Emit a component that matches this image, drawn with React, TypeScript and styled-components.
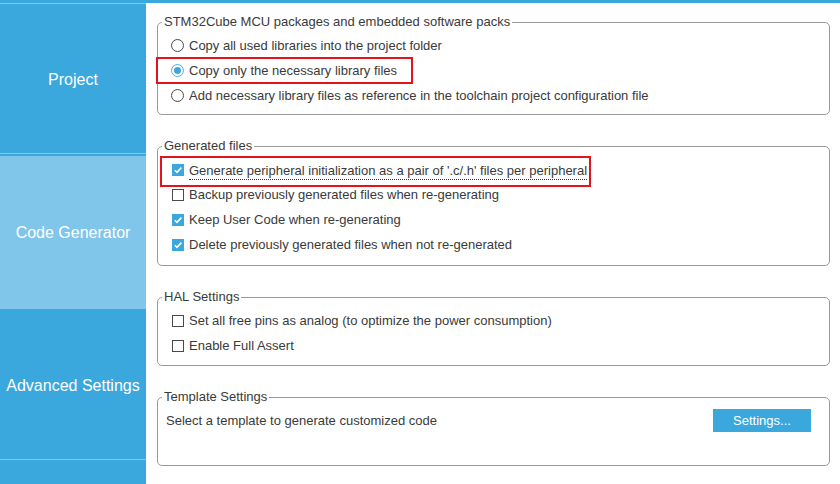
import React from "react";
import styled, { createGlobalStyle, css } from "styled-components";

const Global = createGlobalStyle`
  html, body {
    margin: 0;
    padding: 0;
    background: #fff;
  }
  body {
    font-family: "Liberation Sans", Arial, sans-serif;
    font-size: 13px;
    color: #3a3a3a;
  }
`;

const Page = styled.div`
  width: 840px;
  height: 484px;
  display: flex;
  flex-direction: column;
  overflow: hidden;
`;

const TopBar = styled.div`
  height: 3px;
  background: #3aa8dc;
  flex: none;
`;

const Body = styled.div`
  flex: 1;
  display: flex;
`;

const Sidebar = styled.nav`
  width: 146px;
  flex: none;
  background: #3aa8dc;
  box-shadow: inset 0 1px 0 #80c7ea;
  display: flex;
  flex-direction: column;
`;

const NavItem = styled.div<{ $active?: boolean }>`
  height: 153px;
  flex: none;
  display: flex;
  align-items: center;
  justify-content: center;
  color: #fff;
  font-size: 16px;
  white-space: nowrap;
  ${(p) =>
    p.$active
      ? css`
          background: #7fc6ea;
        `
      : css`
          box-shadow: inset 0 -2px 0 #3aa8dc, inset 0 -3px 0 #80c7ea;
        `}
`;

const Main = styled.main`
  flex: 1;
  padding: 11px 10px 0 11px;
  display: flex;
  flex-direction: column;
  gap: 23px;
`;

const Group = styled.fieldset<{ $h: number }>`
  margin: 0;
  padding: 3px 0 0 0;
  min-width: 0;
  height: ${(p) => p.$h}px;
  box-sizing: border-box;
  border: 1px solid #9a9a9a;
  border-radius: 5px;
`;

const Legend = styled.legend`
  margin-left: 4px;
  padding: 0 2px;
  font-size: 13px;
  line-height: 16px;
  color: #3a3a3a;
`;

type Mark = { x: number; y: number; w: number; h: number };

const Row = styled.div<{ $mark?: Mark }>`
  position: relative;
  height: 25px;
  display: flex;
  align-items: center;
  gap: 5px;
  padding-left: 13px;
  white-space: nowrap;
  ${(p) =>
    p.$mark &&
    css`
      &::after {
        content: "";
        position: absolute;
        left: ${p.$mark.x}px;
        top: ${p.$mark.y}px;
        width: ${p.$mark.w}px;
        height: ${p.$mark.h}px;
        box-sizing: border-box;
        border: 2px solid #e3131c;
        pointer-events: none;
      }
    `}
`;

const Radio = styled.span<{ $on?: boolean }>`
  width: 13px;
  height: 13px;
  box-sizing: border-box;
  border-radius: 50%;
  border: 1px solid ${(p) => (p.$on ? "#52b1df" : "#4a4a4a")};
  background: #fff;
  display: flex;
  align-items: center;
  justify-content: center;
  flex: none;
  &::after {
    content: "";
    width: 7px;
    height: 7px;
    border-radius: 50%;
    background: ${(p) => (p.$on ? "#3aa8dc" : "transparent")};
  }
`;

const Box = styled.span<{ $on?: boolean }>`
  width: 12px;
  height: 12px;
  margin-left: 1px;
  box-sizing: border-box;
  border: 1px solid ${(p) => (p.$on ? "#3aa8dc" : "#4a4a4a")};
  background: ${(p) => (p.$on ? "#3aa8dc" : "#fff")};
  display: flex;
  flex: none;
`;

const Label = styled.span<{ $focus?: boolean }>`
  line-height: 15px;
  color: #3a3a3a;
  ${(p) =>
    p.$focus &&
    css`
      padding-bottom: 1px;
      border-bottom: 1px dotted #333;
      margin-top: 3px;
    `}
`;

const ActionRow = styled.div`
  height: 25px;
  display: flex;
  align-items: center;
  justify-content: space-between;
  padding: 0 18px 0 8px;
`;

const Button = styled.button`
  width: 98px;
  height: 23px;
  border: none;
  background: #3aa8dc;
  color: #fff;
  font-family: "Liberation Sans", Arial, sans-serif;
  font-size: 13px;
  padding: 0;
  cursor: pointer;
`;

const Check = () => (
  <svg width="10" height="10" viewBox="0 0 10 10">
    <polyline
      points="1.8,5.2 4,7.4 8.4,2.6"
      fill="none"
      stroke="#fff"
      strokeWidth="1.6"
    />
  </svg>
);

const RadioOption = ({ on, text, mark }: { on?: boolean; text: string; mark?: Mark }) => (
  <Row $mark={mark}>
    <Radio $on={on} />
    <Label>{text}</Label>
  </Row>
);

const CheckOption = ({
  on,
  text,
  mark,
  focus,
}: {
  on?: boolean;
  text: string;
  mark?: Mark;
  focus?: boolean;
}) => (
  <Row $mark={mark}>
    <Box $on={on}>{on && <Check />}</Box>
    <Label $focus={focus}>{text}</Label>
  </Row>
);

const App = () => {
  return (
    <Page>
      <Global />
      <TopBar />
      <Body>
        <Sidebar>
          <NavItem>Project</NavItem>
          <NavItem $active>Code Generator</NavItem>
          <NavItem>Advanced Settings</NavItem>
        </Sidebar>
        <Main>
          <Group $h={101}>
            <Legend>STM32Cube MCU packages and embedded software packs</Legend>
            <RadioOption text="Copy all used libraries into the project folder" />
            <RadioOption
              on
              text="Copy only the necessary library files"
              mark={{ x: -2, y: -1, w: 257, h: 27 }}
            />
            <RadioOption text="Add necessary library files as reference in the toolchain project configuration file" />
          </Group>
          <Group $h={128}>
            <Legend>Generated files</Legend>
            <CheckOption
              on
              focus
              text="Generate peripheral initialization as a pair of '.c/.h' files per peripheral"
              mark={{ x: 2, y: -1, w: 431, h: 31 }}
            />
            <CheckOption text="Backup previously generated files when re-generating" />
            <CheckOption on text="Keep User Code when re-generating" />
            <CheckOption on text="Delete previously generated files when not re-generated" />
          </Group>
          <Group $h={77}>
            <Legend>HAL Settings</Legend>
            <CheckOption text="Set all free pins as analog (to optimize the power consumption)" />
            <CheckOption text="Enable Full Assert" />
          </Group>
          <Group $h={77}>
            <Legend>Template Settings</Legend>
            <ActionRow>
              <Label>Select a template to generate customized code</Label>
              <Button>Settings...</Button>
            </ActionRow>
          </Group>
        </Main>
      </Body>
    </Page>
  );
};

export default App;
